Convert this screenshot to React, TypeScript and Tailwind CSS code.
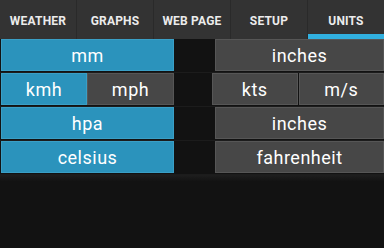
const tabs = ["WEATHER", "GRAPHS", "WEB PAGE", "SETUP", "UNITS"];

function Btn({ label, on, w }: { label: string; on?: boolean; w: string }) {
  return (
    <div
      className={`${w} h-full flex items-center justify-center text-[18px] tracking-[0.5px] text-white border ${
        on ? "bg-[#2b93bc] border-[#3a9fc6]" : "bg-[#474747] border-[#565656]"
      }`}
    >
      {label}
    </div>
  );
}

function Row({ children, right }: { children: React.ReactNode; right: React.ReactNode }) {
  return (
    <div className="h-[34px] border-b border-[#1c1c1c]">
      <div className="flex h-[32px] pl-[1px]">
        <div className="flex w-[173px] h-full">{children}</div>
        <div className="flex-1" />
        {right}
      </div>
    </div>
  );
}

export default function App() {
  return (
    <div className="w-[384px] h-[248px] bg-[#121212] overflow-hidden" style={{ fontFamily: "Roboto, 'Liberation Sans', sans-serif" }}>
      <div className="flex h-[39px] bg-[#333333]">
        {tabs.map((t, i) => (
          <div
            key={t}
            className={`flex-1 flex items-center justify-center text-[12px] font-bold tracking-[0.2px] text-[#ececec] pt-[2px] ${
              i < 4 ? "border-r border-[#2a2a2a]" : ""
            } ${t === "UNITS" ? "border-b-[5px] border-b-[#31b0df] pt-[7px]" : ""}`}
          >
            {t}
          </div>
        ))}
      </div>
      <div className="flex flex-col">
        <Row right={<div className="flex w-[169px] h-full"><Btn label="inches" w="w-full" /></div>}>
          <Btn label="mm" on w="w-full" />
        </Row>
        <Row
          right={
            <div className="flex w-[172px] h-full gap-[1px]">
              <Btn label="kts" w="flex-1" />
              <Btn label="m/s" w="flex-1" />
            </div>
          }
        >
          <Btn label="kmh" on w="w-[86px]" />
          <Btn label="mph" w="w-[87px]" />
        </Row>
        <Row right={<div className="flex w-[169px] h-full"><Btn label="inches" w="w-full" /></div>}>
          <Btn label="hpa" on w="w-full" />
        </Row>
        <Row right={<div className="flex w-[169px] h-full"><Btn label="fahrenheit" w="w-full" /></div>}>
          <Btn label="celsius" on w="w-full" />
        </Row>
        <div className="h-[6px] bg-gradient-to-b from-[#1e1e1e] to-[#131313]" />
      </div>
    </div>
  );
}
